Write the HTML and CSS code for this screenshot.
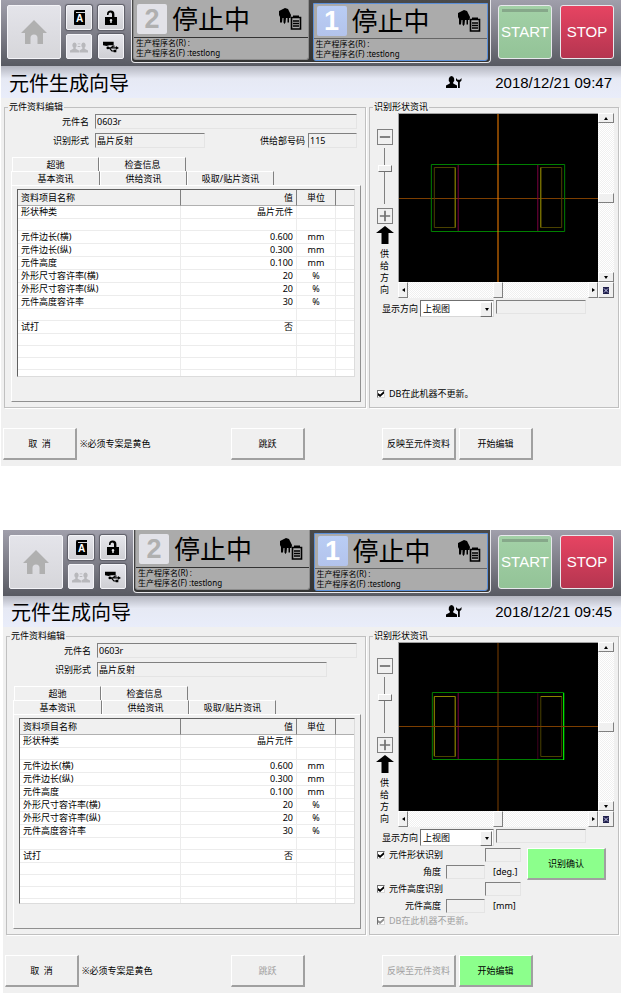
FILE: index.html
```html
<!DOCTYPE html>
<html lang="zh-CN">
  <head>
    <meta charset="UTF-8" />
    <meta name="viewport" content="width=device-width, initial-scale=1.0" />
    <title>元件生成向导</title>

    <link rel="stylesheet" href="styles.css">
  </head>
  <body>
    <!-- Icons -->
    <svg class="sprite" aria-hidden="true">
      <symbol id="icon-home" viewBox="0 0 26 26">
        <path d="M13 1 26 14h-4v11h-5.500v-6a3.500 3.500 0 0 0-7 0v6H4V14H0Z" />
      </symbol>
      <symbol id="icon-unlock" viewBox="0 0 16 16">
        <path d="M2 7h7V4.200a1.700 1.700 0 0 0-3.400 0V5H4V4.200a3.700 3.700 0 0 1 7.400 0V7H14v8H2Z" />
        <path d="M8 9a1.300 1.300 0 0 1 .7 2.400V13H7.300v-1.600A1.300 1.300 0 0 1 8 9Z" fill="#e4e4e8" />
      </symbol>
      <symbol id="icon-users" viewBox="0 0 20 14">
        <path d="M5 2a2.500 3 0 0 1 1.300 5.500V9L10 11v2H0v-2l3.700-2V7.500A2.500 3 0 0 1 5 2ZM15 2a2.500 3 0 0 1 1.300 5.500V9L20 11v2H10.500v-2l3.200-2V7.500A2.500 3 0 0 1 15 2ZM8.500 3h3v1h-3zM8.500 6h3v1h-3z" />
      </symbol>
      <symbol id="icon-usb" viewBox="0 0 18 14">
        <path d="M0 1h12v4H7L4 6 0 5Z" />
        <path d="M5 8h10M7 8l3 3.500h3M9 8l2-2h2" fill="none" stroke="#000" stroke-width="1.300" />
        <path d="M14.500 6 18 8l-3.500 2ZM12 10h3v3h-3z" />
        <circle cx="5.500" cy="8" r="1.600" />
      </symbol>
      <symbol id="icon-hand" viewBox="0 0 24 22">
        <path d="M1 3 7 0l3 1 3 6-.5 3H11v4.500H9.500V10H8l-.5 4.500-1 1.500-1-1.500V10H4.500L4 14.500H2V9L1 7Z" />
        <path d="M13.500 9.500h9v11.500h-9Z" fill="#ababab" stroke="#000" stroke-width="1.600" />
        <path d="M15 7.500h6v2.500h-6Z" />
        <path d="M15 13H21M15 15.500H21M15 18H21" fill="none" stroke="#000" stroke-width="1.300" />
      </symbol>
      <symbol id="icon-operator" viewBox="0 0 16 13">
        <path d="M5.500 0a3 3.500 0 0 1 1.700 6.200V7.500L11 9.500V12H0V9.500l3.800-2V6.200A3 3.500 0 0 1 5.500 0Z" />
        <path d="M10 2v2.500L12 6.200V12h1.800V6.200L15.500 4.500V2l-1.500 1.700h-2.400Z" />
      </symbol>
      <symbol id="icon-supply" viewBox="0 0 18 18">
        <path d="M9 0 18 7h-5.500v11h-7V7H0Z" />
      </symbol>
      <symbol id="icon-minus" viewBox="0 0 14 14">
        <path d="M1 6h12v2H1Z" />
      </symbol>
      <symbol id="icon-plus" viewBox="0 0 14 14">
        <path d="M1 6h5V1h2v5h5v2H8v5H6V8H1Z" />
      </symbol>
      <symbol id="icon-center" viewBox="0 0 6 7">
        <path d="M0 0h6v7H0Z" fill="#20204c" />
        <path d="M1 1.500 5 5.500M5 1.500 1 5.500" stroke="#c8c8ee" fill="none" />
      </symbol>
    </svg>

    <!-- First screen: edit finished -->
    <main class="screen">
      <header class="machine-bar">
        <button class="key key-home" aria-label="主页"><svg><use href="#icon-home" /></svg></button>
        <div class="small-keys">
          <button class="key" aria-label="语言"><span class="book">A</span></button>
          <button class="key" aria-label="解锁"><svg><use href="#icon-unlock" /></svg></button>
          <button class="key key-off" aria-label="用户" disabled><svg><use href="#icon-users" /></svg></button>
          <button class="key" aria-label="USB"><svg><use href="#icon-usb" /></svg></button>
        </div>
        <div class="units">
          <section class="unit">
            <div class="unit-state">
              <b class="unit-number">2</b>
              <span>停止中</span>
              <svg><use href="#icon-hand" /></svg>
            </div>
            <div class="unit-programs"><p>生产程序名(R) :</p><p>生产程序名(F) :testlong</p></div>
          </section>
          <section class="unit unit-active">
            <div class="unit-state">
              <b class="unit-number">1</b>
              <span>停止中</span>
              <svg><use href="#icon-hand" /></svg>
            </div>
            <div class="unit-programs"><p>生产程序名(R) :</p><p>生产程序名(F) :testlong</p></div>
          </section>
        </div>
        <button class="run run-start">START</button>
        <button class="run run-stop">STOP</button>
      </header>

      <div class="title-bar">
        <h1>元件生成向导</h1>
        <svg><use href="#icon-operator" /></svg>
        <time>2018/12/21 09:47</time>
      </div>

      <div class="panels">
        <fieldset>
          <legend>元件资料编辑</legend>
          <div class="fields">
            <div class="field-row">
              <label for="name-1">元件名</label>
              <input id="name-1" class="field field-name" type="text" value="0603r" />
            </div>
            <div class="field-row">
              <label for="form-1">识别形式</label>
              <input id="form-1" class="field field-form" type="text" value="晶片反射" />
              <label for="feeder-1" class="label-feeder">供给部号码</label>
              <input id="feeder-1" class="field field-feeder" type="text" value="115" />
            </div>
          </div>
          <div class="tabs">
            <div class="tab-row tab-row-back">
              <button class="tab">超驰</button>
              <button class="tab">检查信息</button>
            </div>
            <div class="tab-row">
              <button class="tab tab-current">基本资讯</button>
              <button class="tab">供给资讯</button>
              <button class="tab">吸取/贴片资讯</button>
            </div>
          </div>
          <div class="tab-panel">
            <div class="table-box">
              <table>
                <colgroup><col /><col class="col-value" /><col class="col-unit" /><col class="col-rest" /></colgroup>
                <thead>
                  <tr><th>资料项目名称</th><th>值</th><th>単位</th><th></th></tr>
                </thead>
                <tbody>
                  <tr><td>形状种类</td><td>晶片元件</td><td></td><td></td></tr>
                  <tr class="blank"><td></td><td></td><td></td><td></td></tr>
                  <tr><td>元件边长(横)</td><td>0.600</td><td>mm</td><td></td></tr>
                  <tr><td>元件边长(纵)</td><td>0.300</td><td>mm</td><td></td></tr>
                  <tr><td>元件高度</td><td>0.100</td><td>mm</td><td></td></tr>
                  <tr><td>外形尺寸容许率(横)</td><td>20</td><td>%</td><td></td></tr>
                  <tr><td>外形尺寸容许率(纵)</td><td>20</td><td>%</td><td></td></tr>
                  <tr><td>元件高度容许率</td><td>30</td><td>%</td><td></td></tr>
                  <tr class="blank"><td></td><td></td><td></td><td></td></tr>
                  <tr><td>试打</td><td>否</td><td></td><td></td></tr>
                  <tr class="blank"><td></td><td></td><td></td><td></td></tr>
                  <tr class="blank"><td></td><td></td><td></td><td></td></tr>
                  <tr class="blank"><td></td><td></td><td></td><td></td></tr>
                  <tr class="blank"><td></td><td></td><td></td><td></td></tr>
                </tbody>
              </table>
            </div>
          </div>
        </fieldset>

        <fieldset>
          <legend>识别形状资讯</legend>
          <div class="viewer">
            <div class="zoom-bar">
              <button class="zoom-key" aria-label="缩小"><svg><use href="#icon-minus" /></svg></button>
              <input class="zoom-slider" type="range" value="35" aria-label="缩放" />
              <button class="zoom-key" aria-label="放大"><svg><use href="#icon-plus" /></svg></button>
              <svg class="supply-arrow"><use href="#icon-supply" /></svg>
              <p>供给方向</p>
            </div>
            <div class="view">
              <svg class="shape" viewBox="0 0 200 168" preserveAspectRatio="none" fill="none" shape-rendering="crispEdges">
                <path d="M0 84.500H200" stroke="#7c3e00" />
                <path d="M59.500 51V117M139.500 51V117" stroke="#7c0040" />
                <path d="M35.500 53.500h21v60h-21ZM142.500 53.500h21v60h-21Z" stroke="#4a4200" />
                <path d="M56.500 53.500v60M142.500 53.500v60" stroke="#8c8400" />
                <path d="M32.500 50.500h134v67h-134Z" stroke="#008000" />
                <path d="M99.500 0V168" stroke="#ff8400" />
              </svg>
              <div class="scroll scroll-y"><button class="up" aria-label="上"></button><i></i><button class="down" aria-label="下"></button></div>
              <div class="scroll scroll-x"><button class="left" aria-label="左"></button><i></i><button class="right" aria-label="右"></button></div>
              <button class="view-center" aria-label="居中"><svg><use href="#icon-center" /></svg></button>
            </div>
          </div>
          <div class="direction">
            <label for="direction-1">显示方向</label>
            <span class="drop-down"><select id="direction-1"><option>上视图</option></select></span>
            <input class="field" type="text" aria-label="显示状态" />
          </div>
          <label class="check check-db"><input type="checkbox" checked />DB在此机器不更新。</label>
        </fieldset>
      </div>

      <footer class="actions">
        <button class="action">取&nbsp; 消</button>
        <p>※必须专案是黄色</p>
        <button class="action action-skip">跳跃</button>
        <button class="action action-reflect">反映至元件资料</button>
        <button class="action">开始编辑</button>
      </footer>
    </main>

    <!-- Second screen: recognition check -->
    <main class="screen screen-check">
      <header class="machine-bar">
        <button class="key key-home" aria-label="主页"><svg><use href="#icon-home" /></svg></button>
        <div class="small-keys">
          <button class="key" aria-label="语言"><span class="book">A</span></button>
          <button class="key" aria-label="解锁"><svg><use href="#icon-unlock" /></svg></button>
          <button class="key key-off" aria-label="用户" disabled><svg><use href="#icon-users" /></svg></button>
          <button class="key" aria-label="USB"><svg><use href="#icon-usb" /></svg></button>
        </div>
        <div class="units">
          <section class="unit">
            <div class="unit-state">
              <b class="unit-number">2</b>
              <span>停止中</span>
              <svg><use href="#icon-hand" /></svg>
            </div>
            <div class="unit-programs"><p>生产程序名(R) :</p><p>生产程序名(F) :testlong</p></div>
          </section>
          <section class="unit unit-active">
            <div class="unit-state">
              <b class="unit-number">1</b>
              <span>停止中</span>
              <svg><use href="#icon-hand" /></svg>
            </div>
            <div class="unit-programs"><p>生产程序名(R) :</p><p>生产程序名(F) :testlong</p></div>
          </section>
        </div>
        <button class="run run-start">START</button>
        <button class="run run-stop">STOP</button>
      </header>

      <div class="title-bar">
        <h1>元件生成向导</h1>
        <svg><use href="#icon-operator" /></svg>
        <time>2018/12/21 09:45</time>
      </div>

      <div class="panels">
        <fieldset>
          <legend>元件资料编辑</legend>
          <div class="fields">
            <div class="field-row">
              <label for="name-2">元件名</label>
              <input id="name-2" class="field field-name" type="text" value="0603r" />
            </div>
            <div class="field-row">
              <label for="form-2">识别形式</label>
              <input id="form-2" class="field field-form" type="text" value="晶片反射" />
            </div>
          </div>
          <div class="tabs">
            <div class="tab-row tab-row-back">
              <button class="tab">超驰</button>
              <button class="tab">检查信息</button>
            </div>
            <div class="tab-row">
              <button class="tab tab-current">基本资讯</button>
              <button class="tab">供给资讯</button>
              <button class="tab">吸取/贴片资讯</button>
            </div>
          </div>
          <div class="tab-panel">
            <div class="table-box">
              <table>
                <colgroup><col /><col class="col-value" /><col class="col-unit" /><col class="col-rest" /></colgroup>
                <thead>
                  <tr><th>资料项目名称</th><th>值</th><th>単位</th><th></th></tr>
                </thead>
                <tbody>
                  <tr><td>形状种类</td><td>晶片元件</td><td></td><td></td></tr>
                  <tr class="blank"><td></td><td></td><td></td><td></td></tr>
                  <tr><td>元件边长(横)</td><td>0.600</td><td>mm</td><td></td></tr>
                  <tr><td>元件边长(纵)</td><td>0.300</td><td>mm</td><td></td></tr>
                  <tr><td>元件高度</td><td>0.100</td><td>mm</td><td></td></tr>
                  <tr><td>外形尺寸容许率(横)</td><td>20</td><td>%</td><td></td></tr>
                  <tr><td>外形尺寸容许率(纵)</td><td>20</td><td>%</td><td></td></tr>
                  <tr><td>元件高度容许率</td><td>30</td><td>%</td><td></td></tr>
                  <tr class="blank"><td></td><td></td><td></td><td></td></tr>
                  <tr><td>试打</td><td>否</td><td></td><td></td></tr>
                  <tr class="blank"><td></td><td></td><td></td><td></td></tr>
                  <tr class="blank"><td></td><td></td><td></td><td></td></tr>
                  <tr class="blank"><td></td><td></td><td></td><td></td></tr>
                  <tr class="blank"><td></td><td></td><td></td><td></td></tr>
                </tbody>
              </table>
            </div>
          </div>
        </fieldset>

        <fieldset>
          <legend>识别形状资讯</legend>
          <div class="viewer">
            <div class="zoom-bar">
              <button class="zoom-key" aria-label="缩小"><svg><use href="#icon-minus" /></svg></button>
              <input class="zoom-slider" type="range" value="35" aria-label="缩放" />
              <button class="zoom-key" aria-label="放大"><svg><use href="#icon-plus" /></svg></button>
              <svg class="supply-arrow"><use href="#icon-supply" /></svg>
              <p>供给方向</p>
            </div>
            <div class="view">
              <svg class="shape" viewBox="0 0 200 168" preserveAspectRatio="none" fill="none" shape-rendering="crispEdges">
                <path d="M59.500 50V116" stroke="#7c0040" />
                <path d="M139.500 50V116" stroke="#400020" />
                <path d="M35.500 53.500h21v60h-21ZM142.500 53.500h21v60h-21Z" stroke="#4a4200" />
                <path d="M35.500 113V53.500h21v60M142.500 53.500h21" stroke="#8c8400" />
                <path d="M33.500 49.500h132v67h-132Z" stroke="#008000" />
                <path d="M165.500 50v67" stroke="#00ff00" />
                <path d="M99.500 0V168M0 83.500H200" stroke="#7c3e00" />
              </svg>
              <div class="scroll scroll-y"><button class="up" aria-label="上"></button><i></i><button class="down" aria-label="下"></button></div>
              <div class="scroll scroll-x"><button class="left" aria-label="左"></button><i></i><button class="right" aria-label="右"></button></div>
              <button class="view-center" aria-label="居中"><svg><use href="#icon-center" /></svg></button>
            </div>
          </div>
          <div class="direction">
            <label for="direction-2">显示方向</label>
            <span class="drop-down"><select id="direction-2"><option>上视图</option></select></span>
            <input class="field" type="text" aria-label="显示状态" />
          </div>
          <div class="recognition">
            <div class="recognition-rows">
              <div class="recognition-row">
                <label class="check"><input type="checkbox" checked />元件形状识别</label>
                <input class="field field-result" type="text" aria-label="形状识别结果" />
              </div>
              <div class="recognition-row">
                <label class="label-measure" for="angle">角度</label>
                <input id="angle" class="field field-measure" type="text" />
                <span>[deg.]</span>
              </div>
              <div class="recognition-row">
                <label class="check"><input type="checkbox" checked />元件高度识别</label>
                <input class="field field-result" type="text" aria-label="高度识别结果" />
              </div>
              <div class="recognition-row">
                <label class="label-measure" for="height">元件高度</label>
                <input id="height" class="field field-measure" type="text" />
                <span>[mm]</span>
              </div>
            </div>
            <button class="action action-go">识别确认</button>
          </div>
          <label class="check check-db"><input type="checkbox" checked disabled />DB在此机器不更新。</label>
        </fieldset>
      </div>

      <footer class="actions">
        <button class="action">取&nbsp; 消</button>
        <p>※必须专案是黄色</p>
        <button class="action action-skip" disabled>跳跃</button>
        <button class="action action-reflect" disabled>反映至元件资料</button>
        <button class="action action-go">开始编辑</button>
      </footer>
    </main>
  </body>
</html>
```

FILE: styles.css
```css
* {
  box-sizing: border-box;
}

body {
  display: flex;
  flex-direction: column;
  gap: 64px;
  margin: 0;
  background: #fff;
  color: #000;
  font: 9px/12px "Noto Sans", "Noto Sans CJK SC", sans-serif;
}

h1,
p {
  margin: 0;
}

button,
input,
select {
  margin: 0;
  padding: 0;
  border: 0;
  border-radius: 0;
  color: inherit;
  font: inherit;
}

svg {
  display: block;
}

.sprite {
  display: none;
}

.screen {
  margin-left: 1px;
  background: #f0f0f0;
}

.screen-check {
  margin-left: 3px;
}

/* Machine bar */
.machine-bar {
  display: flex;
  align-items: flex-start;
  height: 66px;
  padding: 0 7px 0 6px;
  background: linear-gradient(#a09fab, #777781 60%, #585a62);
}

.key {
  display: grid;
  place-items: center;
  width: 26px;
  height: 25px;
  border: 1px solid #f4f4f8;
  border-radius: 2px;
  background: linear-gradient(#e6e6ec, #cfcfd4);
  box-shadow: 0 0 1px 1px #5c5c66;
}

.key svg {
  width: 16px;
  height: 16px;
}

.key-home {
  width: 54px;
  height: 54px;
  margin: 5px 5px 0 0;
  background: linear-gradient(#e4e4ea, #d6d6da);
  box-shadow: none;
  fill: #b0b0b0;
}

.key-home svg {
  width: 26px;
  height: 26px;
}

.key-off {
  background: #e2e2e8;
  box-shadow: none;
  fill: #b8b8bc;
}

.key-off svg {
  width: 18px;
}

.book {
  width: 11px;
  height: 15px;
  border-top: 1px solid #000;
  border-left: 1px solid #000;
  border-radius: 2px 0 0 1px;
  background: linear-gradient(#d8d8dc, #d8d8dc) 1px 1px / 100% 1px no-repeat #000;
  color: #fff;
  font: bold 10px/16px "Liberation Sans", sans-serif;
}

.small-keys {
  display: grid;
  grid-template-columns: 26px 26px;
  gap: 4px 6px;
  margin: 5px 7px 0 0;
}

.units {
  display: flex;
  flex: 1;
  gap: 4px;
  height: 63px;
  margin-right: 7px;
  padding: 0 2px 1px 1px;
  border: solid #e8e8ec;
  border-width: 0 1px 1px 1px;
  border-radius: 0 0 4px 4px;
  background: linear-gradient(#4a4a4a, #333);
}

.unit {
  flex: 1;
  height: 60px;
  border: 1px solid #8c8c8c;
  border-top: 0;
  border-radius: 0 0 3px 3px;
  background: #ababab;
}

.unit-active {
  height: 58px;
  margin-top: 3px;
  border: 1px solid #5b8fd8;
}

.unit-state {
  display: flex;
  align-items: center;
  height: 38px;
  padding: 0 6px 0 3px;
  border-bottom: 1px solid #333;
}

.unit-active .unit-state {
  height: 35px;
  border-color: #666;
}

.unit-state span {
  margin: 0 auto 0 5px;
  font-size: 26px;
  line-height: 34px;
}

.unit-state svg {
  width: 24px;
  height: 22px;
}

.unit-number {
  width: 30px;
  height: 30px;
  border-radius: 2px;
  background: #e2e2e8;
  color: #b0b0b0;
  font: bold 27px/31px "Liberation Sans", sans-serif;
  text-align: center;
}

.unit-active .unit-number {
  background: linear-gradient(#b9cdf4, #b3c3ec);
  color: #fff;
}

.unit-programs {
  padding: 0 2px;
  font-size: 8px;
  line-height: 10px;
}

.run {
  width: 54px;
  height: 54px;
  margin-top: 5px;
  border: 1px solid #e8e8ec;
  border-radius: 3px;
  color: #fff;
  font: 15px/50px "Liberation Sans", sans-serif;
}

.run-start {
  margin-right: 8px;
  background: linear-gradient(#86a88a, #86a88a) center 3px / 46px 3px no-repeat, linear-gradient(#a3d1a7, #93c397);
}

.run-stop {
  background: linear-gradient(#e64462, #b53550);
}

/* Title bar */
.title-bar {
  display: flex;
  align-items: center;
  height: 32px;
  padding: 3px 9px 0 8px;
  background: linear-gradient(#b4b6c0, #e6e9f4 40%, #e9edfa);
}

.screen-check .title-bar {
  height: 31px;
}

.title-bar h1 {
  margin-right: auto;
  font-size: 20px;
  font-weight: 400;
  line-height: 28px;
}

.title-bar svg {
  width: 16px;
  height: 13px;
  margin: 0 33px 3px 0;
}

.title-bar time {
  padding-bottom: 2px;
  font: 15px/26px "Liberation Sans", sans-serif;
}

/* Group boxes */
.panels {
  display: grid;
  grid-template-columns: minmax(0, 1fr) 250px;
  gap: 3px;
  padding: 3px 2px 0 3px;
}

fieldset {
  min-width: 0;
  margin: 0;
  padding: 0 4px 5px 6px;
  border: 1px solid #c0c0c0;
  box-shadow: 1px 1px 0 #fff;
}

legend {
  margin-left: -3px;
  padding: 0 1px;
}

.fields {
  display: flex;
  flex-direction: column;
  gap: 4px;
  padding: 1px 4px 9px 0;
}

.field-row {
  display: flex;
  align-items: center;
}

.field-row label {
  width: 79px;
  padding-right: 1px;
  text-align: right;
}

.field-row .label-feeder {
  width: auto;
  margin-left: auto;
  padding: 0;
}

.field {
  height: 15px;
  padding-left: 1px;
  border: 1px solid #808080;
  border-right-color: #e4e4e4;
  border-bottom-color: #e4e4e4;
  background: #f0f0f0;
}

.field-row .field {
  margin-left: 5px;
}

.field-name {
  flex: 1;
}

.field-form {
  width: 110px;
}

.screen-check .field-form {
  width: 230px;
}

.field-row .field-feeder {
  width: 49px;
  margin-left: 3px;
}

/* Tabs */
.tab-row {
  display: flex;
}

.tab-row-back {
  padding-left: 1px;
}

.tab {
  width: 87px;
  height: 14px;
  border-top: 1px solid #fff;
  border-left: 1px solid #fff;
  border-right: 1px solid #808080;
  background: #f0f0f0;
}

.tab-current {
  width: 89px;
}

.tab-panel {
  height: 217px;
  padding: 3px 5px;
  border: 1px solid #fff;
  border-right: 1px solid #909090;
  border-bottom: 1px solid #909090;
}

.screen-check .tab-panel {
  height: 215px;
}

.table-box {
  height: 188px;
  overflow: hidden;
  border: 1px solid #606060;
  border-right-color: #dcdcdc;
  border-bottom-color: #dcdcdc;
  background: #fff;
}

.screen-check .table-box {
  height: 186px;
}

table {
  width: 100%;
  border-spacing: 0;
  table-layout: fixed;
}

.col-value {
  width: 116px;
}

.col-unit {
  width: 39px;
}

.col-rest {
  width: 18px;
}

th,
td {
  height: 13px;
  padding: 0 3px;
  border-right: 1px solid #ececec;
  border-bottom: 1px solid #ececec;
  font-weight: 400;
  text-align: left;
  white-space: nowrap;
}

th {
  height: 16px;
  border-right-color: #808080;
  border-bottom-color: #b0b0b0;
  background: #f0f0f0;
}

th:nth-child(2),
td:nth-child(2) {
  text-align: right;
}

th:nth-child(3),
td:nth-child(3) {
  padding: 0;
  text-align: center;
}

th:last-child,
td:last-child {
  border-right: 0;
}

.blank td {
  height: 12px;
}

/* Shape viewer */
.viewer {
  display: flex;
  gap: 5px;
}

.zoom-bar {
  display: flex;
  flex-direction: column;
  align-items: center;
  width: 17px;
  padding-top: 16px;
}

.zoom-key {
  width: 16px;
  height: 16px;
  padding: 1px;
  border: 1px solid #808080;
  background: #f0f0f0;
  fill: #707070;
}

.zoom-key svg {
  width: 12px;
  height: 12px;
}

.zoom-slider {
  width: 14px;
  height: 56px;
  margin: 3px 0 4px;
  background: linear-gradient(#808080, #808080) center / 1px 100% no-repeat;
  appearance: none;
  writing-mode: vertical-lr;
}

.zoom-slider::-webkit-slider-thumb {
  width: 14px;
  height: 7px;
  border: 1px solid #fff;
  border-right-color: #707070;
  border-bottom-color: #707070;
  background: #f0f0f0;
  appearance: none;
}

.supply-arrow {
  width: 18px;
  height: 18px;
  margin: 2px 0 4px;
}

.zoom-bar p {
  width: 9px;
  word-break: break-all;
}

.view {
  display: grid;
  flex: 1;
  grid-template: 169px 16px / minmax(0, 1fr) 16px;
}

.shape {
  width: 100%;
  height: 100%;
  border: solid #a0a0a0;
  border-width: 1px 0 0 1px;
  background: #000;
}

.scroll {
  display: flex;
  align-items: stretch;
  justify-content: space-between;
  background: repeating-conic-gradient(#fff 0 25%, #f0f0f0 0 50%) 0 0 / 2px 2px;
}

.scroll-y {
  flex-direction: column;
}

.scroll button,
.scroll i,
.view-center {
  display: grid;
  flex: none;
  place-items: center;
  min-width: 10px;
  min-height: 10px;
  border: 1px solid #fff;
  border-right-color: #808080;
  border-bottom-color: #808080;
  background: #f0f0f0;
}

.scroll button::before {
  border: 2px solid transparent;
  content: "";
}

.scroll .up::before {
  border-top: 0;
  border-bottom: 3px solid #000;
}

.scroll .down::before {
  border-bottom: 0;
  border-top: 3px solid #000;
}

.scroll .left::before {
  border-left: 0;
  border-right: 3px solid #000;
}

.scroll .right::before {
  border-right: 0;
  border-left: 3px solid #000;
}

.view-center svg {
  width: 6px;
  height: 7px;
}

.direction {
  display: flex;
  align-items: center;
  gap: 2px;
  height: 17px;
  margin-top: 2px;
  padding: 0 28px 0 6px;
}

.drop-down {
  position: relative;
  width: 74px;
}

.drop-down::before {
  position: absolute;
  top: 2px;
  right: 2px;
  width: 10px;
  height: 13px;
  border: 1px solid #fff;
  border-right-color: #707070;
  border-bottom-color: #707070;
  background: #f0f0f0;
  content: "";
  pointer-events: none;
}

.drop-down::after {
  position: absolute;
  top: 8px;
  right: 5px;
  border: 2px solid transparent;
  border-top: 3px solid #000;
  border-bottom: 0;
  content: "";
  pointer-events: none;
}

.drop-down select {
  display: block;
  width: 100%;
  height: 17px;
  padding-left: 2px;
  border: 1px solid #707070;
  border-right-color: #d8d8d8;
  border-bottom-color: #d8d8d8;
  background: #fff;
  appearance: none;
}

.direction .field {
  flex: 1;
  min-width: 0;
  height: 14px;
  margin-bottom: 3px;
}

/* Recognition checks */
.check {
  display: flex;
  align-items: center;
  gap: 4px;
}

.check input {
  width: 8px;
  height: 8px;
  border: 1px solid #707070;
  border-right-color: #d8d8d8;
  border-bottom-color: #d8d8d8;
  background: #fff;
  appearance: none;
}

.check input:checked::before {
  display: block;
  width: 6px;
  height: 6px;
  background: #000;
  clip-path: polygon(0 35%, 35% 60%, 100% 0, 100% 40%, 35% 100%, 0 75%);
  content: "";
}

.check input:disabled::before {
  background: #909090;
}

.check:has(input:disabled) {
  color: #a0a0a0;
}

.check-db {
  margin: 71px 0 0 1px;
}

.screen-check .check-db {
  margin-top: 2px;
}

.recognition {
  display: flex;
  align-items: flex-start;
  gap: 6px;
  margin-top: 2px;
  padding: 0 8px 0 1px;
}

.recognition-rows {
  display: flex;
  flex: 1;
  flex-direction: column;
  gap: 3px;
}

.recognition-row {
  display: flex;
  align-items: center;
  height: 14px;
}

.recognition-row .field {
  height: 14px;
}

.recognition-row .field-result {
  width: 36px;
  margin-left: auto;
}

.label-measure {
  width: 64px;
  text-align: right;
}

.field-measure {
  width: 39px;
  margin: 0 8px 0 5px;
}

/* Bottom buttons */
.actions {
  display: flex;
  align-items: center;
  padding: 20px 88px 6px 2px;
}

.action {
  width: 74px;
  height: 32px;
  border: 1px solid #fff;
  border-right: 2px solid #a0a0a0;
  border-bottom: 2px solid #a0a0a0;
  background: #f0f0f0;
}

.action:disabled {
  color: #a0a0a0;
}

.recognition .action {
  width: 79px;
}

.action-go,
.recognition .action-go {
  background: #8cff8c;
}

.actions p {
  margin: 0 auto 0 3px;
}

.action-reflect {
  margin: 0 3px 0 77px;
}
```
